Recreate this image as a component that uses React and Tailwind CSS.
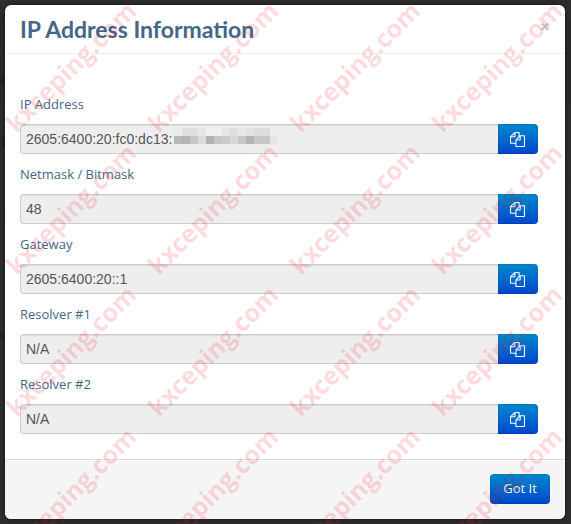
import { useId } from "react";

const fields = [
  { label: "IP Address", value: "2605:6400:20:fc0:dc13:", masked: true },
  { label: "Netmask / Bitmask", value: "48" },
  { label: "Gateway", value: "2605:6400:20::1" },
  { label: "Resolver #1", value: "N/A" },
  { label: "Resolver #2", value: "N/A" },
];

// rows of the pixelated block over the private part of the address
const mosaic = [
  ["#ebebeb", "#dfdfdf", "#dfdfdf", "#e6e6e6", "#f0f0f0", "#f0f0f0", "#e5e5e5", "#dedede", "#e7e7e7", "#e2e2e2", "#dcdcdc", "#dddddd", "#ececec"],
  ["#b3b9bc", "#b6b2b5", "#c6c6c6", "#dcdcdc", "#b3b0b3", "#c6c6c6", "#cbcbcb", "#d9d8d6", "#cdc8c3", "#b5b2b5", "#c6c9cb", "#cdc5c5", "#e3e8ec"],
];

// the dimmed page behind the dialog, only its edges show
const pageRows = [
  { className: "h-[21px]" },
  { className: "h-[83px] bg-[#2b2a28] items-end pb-3.5", text: "a" },
  { className: "h-[76px] items-center", text: "ri" },
  { className: "h-[70px] items-center", text: "o:" },
  { className: "h-[21px]" },
  { className: "h-[50px]" },
  { className: "h-7 items-center", text: "e" },
  { className: "h-[52px]" },
  { className: "h-[52px]" },
];

function PageBehind() {
  return (
    <div className="absolute inset-0 overflow-hidden" aria-hidden="true">
      {pageRows.map((row, i) => (
        <div key={i} className={`flex border-b border-[#272727] ${row.className}`}>
          <span className="flex w-[5px] justify-end overflow-hidden text-[13px] leading-5 font-bold text-[#18222b]">
            {row.text}
          </span>
        </div>
      ))}
    </div>
  );
}

function CopyIcon() {
  return (
    <svg viewBox="0 0 1792 1792" className="size-[15px] fill-white" aria-hidden="true">
      <path d="M1696 384q40 0 68 28t28 68v1216q0 40-28 68t-68 28h-960q-40 0-68-28t-28-68v-288h-544q-40 0-68-28t-28-68v-672q0-40 20-88t48-76l408-408q28-28 76-48t88-20h416q40 0 68 28t28 68v328q68-40 128-40h416zm-544 213l-299 299h299v-299zm-640-384l-299 299h299v-299zm196 647l316-316v-416h-384v416q0 40-28 68t-68 28h-416v640h512v-256q0-40 20-88t48-76zm956 804v-1152h-384v416q0 40-28 68t-68 28h-416v640h896z" />
    </svg>
  );
}

function Mosaic() {
  return (
    <svg
      viewBox="0 0 104 16"
      className="absolute left-[154px] top-1 h-4 w-[104px]"
      shapeRendering="crispEdges"
      aria-hidden="true"
    >
      {mosaic.map((row, y) =>
        row.map((color, x) => (
          <rect key={`${x}-${y}`} x={x * 8} y={y * 8} width="8" height="8" fill={color} />
        ))
      )}
    </svg>
  );
}

function CopyField({ label, value, masked }) {
  const id = useId();

  return (
    <div className="mb-2.5">
      <label htmlFor={id} className="mb-2.5 block text-[13px] leading-5 text-[#446688]">
        {label}
      </label>
      <div className="relative mr-3 flex">
        <input
          id={id}
          type="text"
          readOnly
          value={value}
          className="h-[30px] min-w-0 flex-1 rounded-l border border-r-0 border-[#cccccc] bg-[#eeeeee] px-[5px] font-['Liberation_Sans',sans-serif] text-sm text-[#555555] shadow-[inset_0_1px_1px_rgba(0,0,0,0.075)] outline-none"
        />
        {masked && <Mosaic />}
        <button
          type="button"
          aria-label={`Copy ${label}`}
          className="flex h-[30px] w-10 items-center justify-center rounded-r border border-black/10 bg-linear-to-b from-[#0088cc] to-[#0044cc] bg-origin-border pr-0.5"
        >
          <CopyIcon />
        </button>
      </div>
    </div>
  );
}

function Watermark() {
  return (
    <div
      className="pointer-events-none absolute inset-0 grid auto-rows-[142px] grid-cols-[repeat(auto-fill,142px)] overflow-hidden"
      aria-hidden="true"
    >
      {Array.from({ length: 16 }, (_, i) => (
        <div key={i} className="flex items-center justify-center pb-2">
          <span className="-rotate-45 text-[25px] font-bold text-[#f01428]/17">kxceping.com</span>
        </div>
      ))}
    </div>
  );
}

export default function App() {
  return (
    <div className="relative min-h-screen overflow-hidden bg-[#2d2d2d] p-[5px] pr-1.5 font-['Open_Sans',sans-serif]">
      <PageBehind />
      <div
        role="dialog"
        aria-labelledby="modal-title"
        className="relative overflow-hidden rounded-md bg-white shadow-[0_0_4px_rgba(0,0,0,0.6)]"
      >
        <div className="flex items-start justify-between border-b border-[#eeeeee] px-[15px] py-[9px]">
          <h3
            id="modal-title"
            className="font-['Lato',sans-serif] text-[23px] leading-[30px] font-bold text-[#446688]"
          >
            IP Address Information
          </h3>
          <button
            type="button"
            aria-label="Close"
            className="mt-0.5 text-lg leading-5 font-bold text-black/25"
          >
            ×
          </button>
        </div>

        <div className="px-[15px] pt-10 pb-[15px]">
          {fields.map((field) => (
            <CopyField key={field.label} {...field} />
          ))}
        </div>

        <div className="flex justify-end border-t border-[#dddddd] bg-[#f5f5f5] px-[15px] pt-3.5 pb-[15px] shadow-[inset_0_1px_0_#ffffff]">
          <button
            type="button"
            className="h-[30px] w-[60px] rounded border border-black/10 bg-linear-to-b from-[#0088cc] to-[#0044cc] bg-origin-border text-[13px] text-white [text-shadow:0_-1px_0_rgba(0,0,0,0.25)]"
          >
            Got It
          </button>
        </div>
      </div>
      <Watermark />
    </div>
  );
}
